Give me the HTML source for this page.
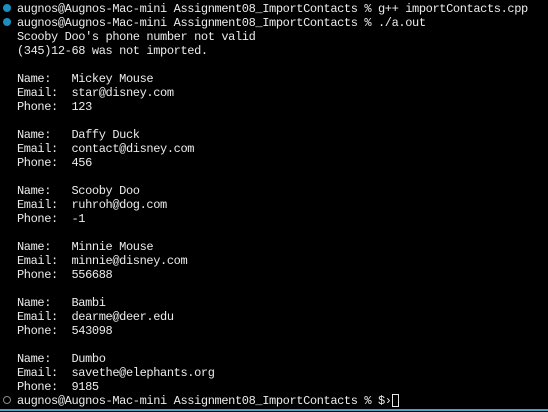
<!DOCTYPE html>
<html><head><style>
html,body{margin:0;padding:0;background:#000;width:548px;height:412px;overflow:hidden}
pre{position:absolute;left:17px;top:2px;margin:0;font-family:"Liberation Mono",monospace;font-size:12px;letter-spacing:-0.39px;line-height:14px;color:#ececec}
.dot{position:absolute;left:3px;width:8px;height:8px;border-radius:50%;background:#1a8fc0}
.odot{position:absolute;left:3px;top:396px;width:6px;height:6px;border-radius:50%;border:1px solid #888}
.cur{display:inline-block;width:7px;height:13px;border:1px solid #e8e8e8;vertical-align:-3px;box-sizing:border-box}
.line{position:absolute;left:0;top:409px;width:548px;height:2px;background:#4aa3c8}
</style></head><body>
<div class="dot" style="top:4px"></div>
<div class="dot" style="top:18px"></div>
<div class="odot"></div>
<pre>augnos@Augnos-Mac-mini Assignment08_ImportContacts % g++ importContacts.cpp
augnos@Augnos-Mac-mini Assignment08_ImportContacts % ./a.out
Scooby Doo's phone number not valid
(345)12-68 was not imported.

Name:   Mickey Mouse
Email:  star@disney.com
Phone:  123

Name:   Daffy Duck
Email:  contact@disney.com
Phone:  456

Name:   Scooby Doo
Email:  ruhroh@dog.com
Phone:  -1

Name:   Minnie Mouse
Email:  minnie@disney.com
Phone:  556688

Name:   Bambi
Email:  dearme@deer.edu
Phone:  543098

Name:   Dumbo
Email:  savethe@elephants.org
Phone:  9185
augnos@Augnos-Mac-mini Assignment08_ImportContacts % $›<span class="cur"></span></pre>
<div class="line"></div>
</body></html>
